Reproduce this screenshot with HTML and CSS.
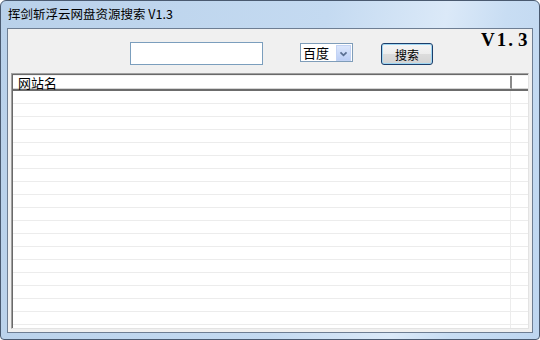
FILE: index.html
```html
<html>
  <head>
    <link rel="stylesheet" href="styles.css">
  </head>
  <body>
    <div class="window">
      <div class="titlebar">挥剑斩浮云网盘资源搜索 V1.3</div>
      <div class="client">
        <div class="toolbar">
          <input type="text" class="keyword"/>
          <div class="engine">
            <span class="engine-text">百度</span>
            <span class="engine-arrow">
              <svg width="15" height="16" viewBox="0 0 15 16"><path d="M4 6 L7.5 9.5 L11 6" fill="none" stroke="#5a6f92" stroke-width="2"/></svg>
            </span>
          </div>
          <button class="search">搜索</button>
          <div class="version">V1.<span class="gap">3</span></div>
        </div>
        <div class="list">
          <div class="list-head">
            <div class="head-name">网站名</div>
            <div class="head-rest"></div>
          </div>
          <div class="list-body">
            <div class="col-name"></div>
            <div class="col-rest"></div>
          </div>
        </div>
      </div>
    </div>
  </body>
</html>
```

FILE: styles.css
```css
*{
  margin: 0px;
  padding: 0px;
  box-sizing: border-box;
}
body{
  background: #fff;
  font-family: "Noto Sans CJK SC", "Liberation Sans", sans-serif;
  font-size: 12px;
  color: #000;
}
.window{
  width: 540px;
  height: 340px;
  border: 1px solid #4a5a70;
  border-radius: 6px 6px 4px 4px;
  background: linear-gradient(100deg, #b9d1ea 0%, #c4daf1 55%, #dbe9f8 75%, #c8ddf3 85%, #bed6f0 100%);
  display: flex;
  flex-direction: column;
}
.titlebar{
  height: 27px;
  padding-left: 7px;
  line-height: 26px;
  font-size: 12.5px;
  color: #000;
}
.client{
  flex: 1;
  margin: 0px 6px 6px 6px;
  background: #f0f0f0;
  border: 1px solid #6e7e93;
  display: flex;
  flex-direction: column;
}
.toolbar{
  height: 44px;
  display: flex;
  align-items: flex-start;
  padding-left: 122px;
}
.keyword{
  margin-top: 13px;
  width: 133px;
  height: 23px;
  border: 1px solid #7b9ebd;
  background: #fff;
}
.engine{
  margin-top: 14px;
  margin-left: 37px;
  width: 53px;
  height: 19px;
  border: 1px solid #7f9db9;
  background: #fff;
  display: flex;
  align-items: center;
  padding-left: 2px;
}
.engine-text{
  flex: 1;
  font-size: 13px;
  line-height: 17px;
}
.engine-arrow{
  width: 15px;
  height: 16px;
  margin-right: 1px;
  background: linear-gradient(#dce7fc, #bccff6);
  border: 1px solid #c3d3f4;
  display: flex;
}
.search{
  margin-top: 14px;
  margin-left: 28px;
  width: 52px;
  height: 22px;
  border: 1px solid #1c3e6b;
  border-radius: 3px;
  background: linear-gradient(#f6f6f6 0%, #ececec 50%, #dcdcdc 51%, #d3d3d3 100%);
  box-shadow: inset 0 0 0 1px #9fd6f2;
  font-family: "Noto Sans CJK SC", sans-serif;
  font-size: 12px;
  color: #000;
}
.version{
  margin-left: 48px;
  margin-top: 0px;
  font-family: "Liberation Serif", "DejaVu Serif", serif;
  font-weight: bold;
  font-size: 19px;
  color: #000;
  letter-spacing: 2px;
}
.gap{
  margin-left: 3px;
}
.list{
  flex: 1;
  margin: 0px 3px 3px 3px;
  border: 1px solid #a0a0a0;
  border-right-color: #e3e3e3;
  border-bottom-color: #e3e3e3;
  box-shadow: inset 1px 1px 0 #696969;
  background: #fff;
  display: flex;
  flex-direction: column;
}
.list-head{
  height: 16px;
  display: flex;
  margin-left: 1px;
  margin-top: 1px;
  background: #f1f1f1;
  border-bottom: 2px solid #6c6c6c;
}
.head-name{
  flex: 1;
  padding-left: 5px;
  line-height: 14px;
  font-size: 13px;
  border-right: 2px solid #8a8a8a;
  margin-top: 1px;
  background: #fff;
  border-bottom: 1px solid #d5d5d5;
}
.head-rest{
  width: 16px;
  background: #fff;
  margin-top: 1px;
  border-bottom: 1px solid #d5d5d5;
}
.list-body{
  flex: 1;
  display: flex;
  margin-left: 1px;
  background-image: linear-gradient(#fff 12px, #ececec 12px);
  background-size: 100% 13px;
}
.col-name{
  flex: 1;
  border-right: 1px solid #ececec;
}
.col-rest{
  width: 17px;
}
```
